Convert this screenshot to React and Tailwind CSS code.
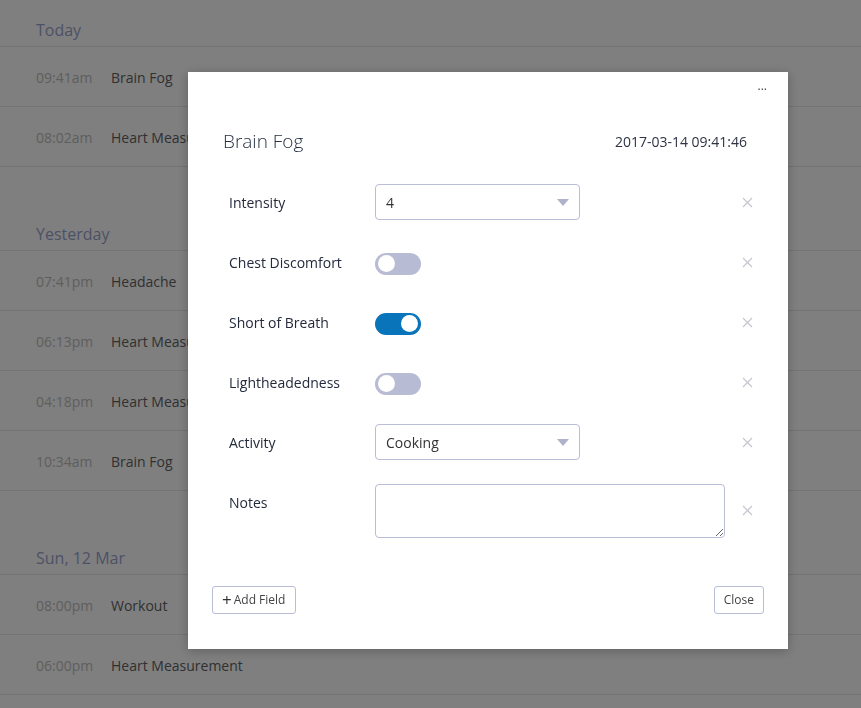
import React from "react";

const sections = [
  {
    day: "Today",
    items: [
      { time: "09:41am", name: "Brain Fog" },
      { time: "08:02am", name: "Heart Measurement" },
    ],
  },
  {
    day: "Yesterday",
    items: [
      { time: "07:41pm", name: "Headache" },
      { time: "06:13pm", name: "Heart Measurement" },
      { time: "04:18pm", name: "Heart Measurement" },
      { time: "10:34am", name: "Brain Fog" },
    ],
  },
  {
    day: "Sun, 12 Mar",
    items: [
      { time: "08:00pm", name: "Workout" },
      { time: "06:00pm", name: "Heart Measurement" },
    ],
  },
];

const CloseX = () => (
  <svg width="11" height="11" viewBox="0 0 11 11" className="text-[#c4c6d0]">
    <path d="M1 1L10 10M10 1L1 10" stroke="currentColor" strokeWidth="1.2" />
  </svg>
);

const Toggle = ({ on }) => (
  <div
    className={`mt-[3px] w-[46px] h-[22px] rounded-full flex items-center px-[3px] ${
      on ? "bg-[#0a74bb] justify-end" : "bg-[#b7bbd4] justify-start"
    }`}
  >
    <div className="w-[17px] h-[17px] rounded-full bg-white" />
  </div>
);

const Select = ({ value }) => (
  <div className="w-[205px] h-[36px] border border-[#b9bdd6] rounded-[4px] flex items-center justify-between pl-[10px] pr-[10px] text-[14px] text-[#333]">
    <span>{value}</span>
    <svg width="12" height="7" viewBox="0 0 12 7">
      <path d="M0 0H12L6 7Z" fill="#aeb2cb" />
    </svg>
  </div>
);

const Field = ({ label, children, tall }) => (
  <div className={`flex ${tall ? "items-start pt-[12px] h-[76px]" : "items-center h-[60px]"}`}>
    <div
      className={`w-[146px] text-[14px] font-medium text-[#232a3c] ${tall ? "pt-[8px]" : ""}`}
    >
      {label}
    </div>
    <div className="flex-1">{children}</div>
    <div className={`w-[12px] flex justify-center ${tall ? "pt-[21px]" : ""}`}>
      <CloseX />
    </div>
  </div>
);

export default function App() {
  return (
    <div className="relative min-h-[708px] bg-white font-['Open_Sans',sans-serif]">
      {/* background list */}
      <div>
        {sections.map((s, i) => (
          <div key={s.day} className={i > 0 ? "mt-[37px]" : ""}>
            <div className="h-[47px] pt-[18px] pl-[36px] text-[16px] leading-6 text-[#9ba3cd] border-b border-[#e6e6e6]">
              {s.day}
            </div>
            {s.items.map((it, j) => (
              <div
                key={j}
                className="h-[60px] flex items-center pt-[2px] pl-[36px] border-b border-[#e6e6e6] text-[14px]"
              >
                <span className="w-[75px] text-[#bdbdbd]">{it.time}</span>
                <span className="text-[#626262]">{it.name}</span>
              </div>
            ))}
          </div>
        ))}
      </div>

      {/* overlay */}
      <div className="fixed inset-0 bg-black/50" />

      {/* modal */}
      <div className="fixed left-[188px] top-[72px] w-[600px] h-[577px] bg-white shadow-[0_2px_10px_rgba(0,0,0,0.25)] flex flex-col">
        <div className="flex justify-end pr-[21px] pt-[8px] h-[28px] text-[12px] leading-[12px] text-[#444]">
          ...
        </div>
        <div className="flex items-center justify-between pl-[35px] pr-[41px] h-[80px] pt-[2px]">
          <span className="text-[19px] font-light text-[#253042]">Brain Fog</span>
          <span className="text-[14px] text-[#2e3445]">2017-03-14 09:41:46</span>
        </div>
        <div className="pl-[41px] pr-[35px] mt-[-8px]">
          <Field label="Intensity">
            <Select value="4" />
          </Field>
          <Field label="Chest Discomfort">
            <Toggle on={false} />
          </Field>
          <Field label="Short of Breath">
            <Toggle on />
          </Field>
          <Field label="Lightheadedness">
            <Toggle on={false} />
          </Field>
          <Field label="Activity">
            <Select value="Cooking" />
          </Field>
          <Field label="Notes" tall>
            <textarea className="block w-[350px] h-[54px] border border-[#b9bdd6] rounded-[4px] resize-y outline-none" />
          </Field>
        </div>
        <div className="mt-auto mb-[35px] flex justify-between pl-[24px] pr-[24px]">
          <button className="h-[28px] pl-[9px] pr-[10px] border border-[#b9bdd6] rounded-[3px] text-[12px] text-[#444] flex items-center gap-[2px]">
            <span className="text-[17px] leading-none text-[#333] -mt-[2px]">+</span>
            Add Field
          </button>
          <button className="h-[28px] px-[9px] border border-[#b9bdd6] rounded-[3px] text-[12px] text-[#444]">
            Close
          </button>
        </div>
      </div>
    </div>
  );
}
